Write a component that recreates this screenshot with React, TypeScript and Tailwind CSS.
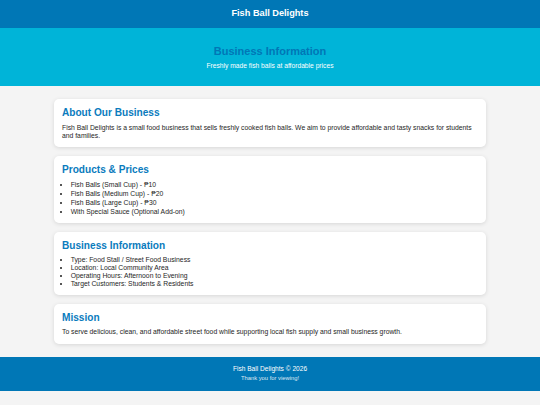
export default function App() {
  const products = [
    "Fish Balls (Small Cup) - ₱10",
    "Fish Balls (Medium Cup) - ₱20",
    "Fish Balls (Large Cup) - ₱30",
    "With Special Sauce (Optional Add-on)",
  ];
  const info = [
    "Type: Food Stall / Street Food Business",
    "Location: Local Community Area",
    "Operating Hours: Afternoon to Evening",
    "Target Customers: Students & Residents",
  ];
  const card = "bg-white rounded-[5px] shadow-[0_1px_4px_rgba(0,0,0,0.12)] p-[8px]";
  const h2 = "text-[10.1px] leading-[12px] font-bold text-[#0a7bbd] mb-[4.8px]";
  return (
    <div className="min-h-[405px] bg-[#f4f4f4] text-[#1e1e1e] font-['Liberation_Sans',Arial,sans-serif]">
      <header className="h-[28px] bg-[#0077b6] flex items-center justify-center">
        <h1 className="text-[9.2px] font-bold text-white leading-none">Fish Ball Delights</h1>
      </header>
      <section className="h-[58px] bg-[#00b4d8] flex flex-col items-center pt-[16.5px]">
        <h2 className="text-[11px] leading-[13px] font-bold text-[#0077b6]">Business Information</h2>
        <p className="text-[6.7px] leading-[8px] text-white mt-[4.2px]">Freshly made fish balls at affordable prices</p>
      </section>
      <main className="w-[432px] mx-auto pt-[13.2px] pb-[12.8px] flex flex-col gap-[8.4px] text-[6.8px] leading-[7.7px]">
        <div className={card}>
          <h3 className={h2}>About Our Business</h3>
          <p>
            Fish Ball Delights is a small food business that sells freshly cooked fish balls. We aim to provide affordable and tasty snacks for students and families.
          </p>
        </div>
        <div className={card}>
          <h3 className={h2}>Products &amp; Prices</h3>
          <ul className="list-disc pl-[8.7px] flex flex-col gap-[1.3px]">
            {products.map((p) => (
              <li key={p}>{p}</li>
            ))}
          </ul>
        </div>
        <div className={card}>
          <h3 className={h2}>Business Information</h3>
          <ul className="list-disc pl-[8.7px]">
            {info.map((p) => (
              <li key={p}>{p}</li>
            ))}
          </ul>
        </div>
        <div className={card}>
          <h3 className={h2}>Mission</h3>
          <p>To serve delicious, clean, and affordable street food while supporting local fish supply and small business growth.</p>
        </div>
      </main>
      <footer className="h-[34px] bg-[#0077b6] text-white flex flex-col items-center pt-[8px]">
        <p className="text-[6.6px] leading-[8.6px]">Fish Ball Delights © 2026</p>
        <p className="text-[5.8px] leading-[7px] mt-[1.5px] opacity-85">Thank you for viewing!</p>
      </footer>
    </div>
  );
}
